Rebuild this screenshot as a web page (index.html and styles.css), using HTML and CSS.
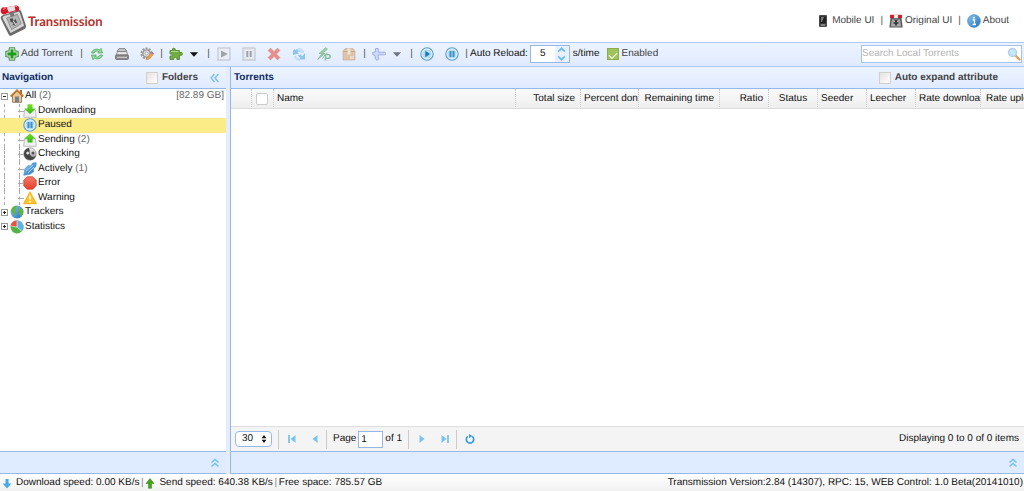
FILE: index.html
```html
<!DOCTYPE html>
<html lang="en">
<head>
<meta charset="utf-8">
<title>Transmission</title>
<link rel="stylesheet" href="styles.css">
</head>
<body>
<svg class="defs" width="0" height="0" aria-hidden="true">
  <defs>
    <linearGradient id="g-blue" x1="0" y1="0" x2="1" y2="1"><stop offset="0" stop-color="#8cc8f4"/><stop offset="1" stop-color="#1f6fbd"/></linearGradient>
    <linearGradient id="g-green" x1="0" y1="0" x2="0" y2="1"><stop offset="0" stop-color="#7be02a"/><stop offset="1" stop-color="#2fb512"/></linearGradient>
    <linearGradient id="g-grey" x1="0" y1="0" x2="0" y2="1"><stop offset="0" stop-color="#f4f4f4"/><stop offset="1" stop-color="#8a8a8a"/></linearGradient>
    <linearGradient id="g-red" x1="0" y1="0" x2="0" y2="1"><stop offset="0" stop-color="#f87a64"/><stop offset="1" stop-color="#e2412e"/></linearGradient>
  </defs>
  <symbol id="logo" viewBox="0 0 28 36">
    <path d="M3 14 19 9q2-1 3 1l5 15q0 2-1 3L12 35q-2 1-3-1L1 18q-1-3 2-4z" fill="#6b6b6b"/>
    <path d="M4 15 19 10.500q1-.4 1.500 1L25 25 11 32.500 3 18q-1-2 1-3z" fill="#d5d5d5"/>
    <path d="M7 17 18 13l4 10-10 6z" fill="#b4b4b4" stroke="#777" stroke-width=".7"/>
    <path d="m10 18 3-1 1 3 2-2 2 4-2 3-3-1 1-2-3-1z" fill="#505050"/>
    <path d="m14 20 2 4 1-2" fill="none" stroke="#eee" stroke-width="1"/>
    <path d="m9 8 4-1 2 8-4 1z" fill="#777"/>
    <path d="M1 8q-1 4 2 5 2 1 4-1l9-2q3 1 4-2 0-4-3-4L5 6Q2 5 1 8z" fill="#d8182a"/>
    <path d="m7 6 8-2 1 5-7 2z" fill="#e9e4e4"/><path d="m3 8 3-1M16 5l2 0" stroke="#ff8790" stroke-width="1"/>
  </symbol>
  <symbol id="phone" viewBox="0 0 14 14"><rect x="3" y="1" width="8" height="12" rx="1" fill="#4b4b4b"/><rect x="4" y="2.500" width="6" height="7" fill="#222"/><path d="M5 3h3L6 8H5z" fill="#777"/><path d="M5 11h4" stroke="#bbb"/></symbol>
  <symbol id="original" viewBox="0 0 14 14"><path d="M1.500 4h11L13.700 13.500H.3z" fill="#5d5d5d"/><path d="M3 5.500h8l1 7H2z" fill="#a9a9a9"/><path d="M5 4h4v3H5z" fill="#777"/><path d="M1 .8h12V4H1z" fill="#d51d23"/><path d="M5 .8h4V4H5z" fill="#eee"/><path d="M7 6v5.500M4.500 9h5" stroke="#333" stroke-width="1.700"/></symbol>
  <symbol id="info" viewBox="0 0 14 14"><circle cx="7" cy="7" r="6.300" fill="url(#g-blue)" stroke="#3c86c8" stroke-width=".8"/><circle cx="7" cy="3.800" r="1" fill="#fff"/><path d="M5.700 6h1.800v4M5.500 10.500h3.500" stroke="#fff" stroke-width="1.300" fill="none"/></symbol>
  <symbol id="add" viewBox="0 0 14 14"><path d="M4.500.8h5l.6 3.100 3.100.6v5l-3.100.6-.6 3.100h-5l-.6-3.100-3.100-.6v-5l3.100-.6z" fill="#c4e8c0" stroke="#5b8f58" stroke-width="1.100"/><path d="M7 2.500v9M2.500 7h9" stroke="#1e9a1e" stroke-width="2.800"/></symbol>
  <symbol id="reload" viewBox="0 0 14 14"><path d="M1.500 6C2 2.500 7 1 9.500 3L11 1.300 12.500 6H7.700L9 4.700C7 3.300 4.500 4 4 6z" fill="#8fdc94" stroke="#4aa45a" stroke-width=".7"/><path d="M12.500 8c-.5 3.500-5.500 5-8 3L3 12.700 1.500 8h4.800L5 9.300C7 10.700 9.500 10 10 8z" fill="#8fdc94" stroke="#4aa45a" stroke-width=".7"/></symbol>
  <symbol id="drive" viewBox="0 0 14 14"><path d="M4 1.500h6l2 3H2z" fill="#aaa" stroke="#777" stroke-width=".7"/><path d="M2.500 4.500h9L13 8H1z" fill="#ddd" stroke="#777" stroke-width=".7"/><rect x=".5" y="8" width="13" height="4.500" rx="1" fill="#888" stroke="#666" stroke-width=".7"/><path d="M2 10.300h10M4 3h6M3 6.300h8" stroke="#eee" stroke-width=".8"/></symbol>
  <symbol id="gear" viewBox="0 0 14 14"><circle cx="6.500" cy="6.500" r="5" fill="none" stroke="#999" stroke-width="2.200" stroke-dasharray="2 1.140"/><circle cx="6.500" cy="6.500" r="3.600" fill="#ddd" stroke="#999" stroke-width="1.400"/><circle cx="6.500" cy="6.500" r="1.500" fill="#f8f8ff" stroke="#888" stroke-width=".6"/><path d="m6.500 13 1-3 3.700-4.200 2 1.800L9.300 12z" fill="#f3a13b" stroke="#c27836" stroke-width=".4"/><path d="m11 6 1-1.200 2 1.700-1 1.200z" fill="#c95fc0"/></symbol>
  <symbol id="puzzle" viewBox="0 0 14 14"><path d="M1 3.500h2.700Q2.700 1.200 4.800 1.200T6 3.500h4.500v2.300q2.800-1.500 3 .9t-3 1.500v4.300H7.800q.8-2.200-1.500-2.200t-1.500 2.200H1V9q2.300.6 2.300-1T1 7z" fill="#73ac40" stroke="#4b8424" stroke-width=".8"/><path d="M2 4.500h7.500" stroke="#b2d98a"/></symbol>
  <symbol id="caret" viewBox="0 0 8 6"><path d="M.5 1h7L4 5z"/></symbol>
  <symbol id="start" viewBox="0 0 14 14"><rect x="1" y="1" width="12" height="12" fill="#eee" stroke="#999"/><path d="M4 3.500 11 7l-7 3.500z" fill="#666"/></symbol>
  <symbol id="pause" viewBox="0 0 14 14"><rect x="1" y="1" width="12" height="12" fill="#e5e5e5" stroke="#999"/><path d="M5.300 4v6M8.700 4v6" stroke="#666" stroke-width="2"/></symbol>
  <symbol id="remove" viewBox="0 0 14 14"><path d="m3.500 1 3.500 3.500L10.500 1 13 3.500 9.500 7l3.500 3.500-2.500 2.500L7 9.500 3.500 13 1 10.500 4.500 7 1 3.500z" fill="#e2452f" stroke="#d0402e" stroke-width=".5"/></symbol>
  <symbol id="recheck" viewBox="0 0 14 14"><path d="M1 8V3.500L2.500 2l1 1Q6 .5 9 2L7.500 4.500 5.500 5 7 6.500z" fill="#4aa3dc"/><path d="M5 2.500 8.500 6H12V4L9 1z" fill="#a5d5f0"/><path d="M13 6v6.500H7l1.500-1.700Q6.500 10 6 8l3-.5q0 1.500 1.200 1.800z" fill="#4aa3dc"/><path d="M3 9q1 4 5 4" fill="none" stroke="#a0d2ee" stroke-width="2"/></symbol>
  <symbol id="announce" viewBox="0 0 14 14"><path d="M8.500.7 2 6.500h3L.7 12.500 8 6.500H5.800L10.500 2z" fill="#53c04b" stroke="#2f8b38" stroke-width=".7"/><path d="M8.500 13.500V7.500h2q2.700 0 2.700 1.900t-2.700 1.900h-2" fill="none" stroke="#3d9a4c" stroke-width="1.500"/><path d="M5.500 11.500q2-4 5-5.500" fill="none" stroke="#777"/></symbol>
  <symbol id="box" viewBox="0 0 14 14"><path d="M1 4 3 1.500h8L13 4v9H1z" fill="#d8a165" stroke="#b57e45" stroke-width=".7"/><path d="M1.500 4.500h11" stroke="#a86f35"/><path d="M5.500 1.500h3V8L7 7 5.500 8z" fill="#f4dfb2"/><path d="M8 9h4v3H8z" fill="#efcaa0"/></symbol>
  <symbol id="speed" viewBox="0 0 14 14"><path d="M3.500 1.500h2.700v3.700h6.300q1 0 1 1.300t-1 1.300H6.200v2.400l.8 1.600-2 1.500-1.800-1.500V8.800L.7 7.500v-2l2.800-.8z" fill="#bcc8f5" stroke="#6477e0" stroke-width="1"/></symbol>
  <symbol id="play-c" viewBox="0 0 14 14"><circle cx="7" cy="7" r="6.200" fill="#e3f3fc" stroke="#5a9dca" stroke-width="1.100"/><circle cx="7" cy="7" r="4.600" fill="#b4dcf5"/><path d="M5.300 3.700 10 7l-4.700 3.300z" fill="#1778ba"/></symbol>
  <symbol id="pause-c" viewBox="0 0 14 14"><circle cx="7" cy="7" r="6.200" fill="#e3f3fc" stroke="#5a9dca" stroke-width="1.100"/><circle cx="7" cy="7" r="4.600" fill="#b4dcf5"/><path d="M5.500 4v6M8.500 4v6" stroke="#3f8ec6" stroke-width="2"/></symbol>
  <symbol id="search" viewBox="0 0 14 14"><path d="m8.500 8.500 4 4" stroke="#e2a355" stroke-width="2.400" stroke-linecap="round"/><circle cx="5.500" cy="5.500" r="4" fill="#c6e6fa" stroke="#b3cfe6" stroke-width="1.400"/></symbol>
  <symbol id="up" viewBox="0 0 8 5"><path d="M1 4 4 1l3 3" fill="none" stroke="#6fbdf0" stroke-width="1.600"/></symbol>
  <symbol id="down" viewBox="0 0 8 5"><path d="m1 1 3 3 3-3" fill="none" stroke="#6fbdf0" stroke-width="1.600"/></symbol>
  <symbol id="dbl-left" viewBox="0 0 10 10"><path d="M4.500 1 1 5l3.500 4M8.500 1 5 5l3.500 4" fill="none" stroke="#71bff2" stroke-width="1.300"/></symbol>
  <symbol id="dbl-up" viewBox="0 0 10 10"><path d="M1.500 4.500 5 1.500l3.500 3M1.500 8.500l3.500-3 3.500 3" fill="none" stroke="#71bff2" stroke-width="1.400"/></symbol>
  <symbol id="home" viewBox="0 0 14 14"><path d="M2.500 6 7 2l4.500 4v7.300h-9z" fill="#e8c897" stroke="#8d6b42" stroke-width=".8"/><path d="M10 1h2v4h-2z" fill="#a7693c"/><path d="M.7 7.500 7 1.300l6.300 6.200" fill="none" stroke="#c0792f" stroke-width="1.800"/><path d="M5 7.500h4v6H5z" fill="#77818c"/></symbol>
  <symbol id="t-down" viewBox="0 0 14 14"><path d="M1.500 6h11l.8 7.300H.7z" fill="#efefef" stroke="#b0b0b0" stroke-width=".8"/><path d="M4.500.3h5v4.200h3.300L7 10 1.200 4.500h3.300z" fill="url(#g-green)"/></symbol>
  <symbol id="t-up" viewBox="0 0 14 14"><path d="M1.500 6h11l.8 7.300H.7z" fill="#efefef" stroke="#b0b0b0" stroke-width=".8"/><path d="M7 .2 12.800 5.700H9.500V9.500h-5V5.700H1.200z" fill="url(#g-green)"/></symbol>
  <symbol id="check" viewBox="0 0 14 14"><circle cx="7" cy="7" r="6.200" fill="url(#g-grey)" stroke="#777" stroke-width=".6"/><path d="M6 1a6 6 0 1 0 6.800 7.500Q10 11 8 9T6.500 5 6 1z" fill="#444"/><circle cx="4.700" cy="6" r="1.500" fill="#ddd"/><circle cx="10" cy="6" r="1.500" fill="#555"/></symbol>
  <symbol id="active" viewBox="0 0 14 14"><path d="M.7 13.300 1.800 7 5 3.500l3 .3L9.500 1l3.800-.3-.5 4-2.300 2 .2 3L7 12.300z" fill="url(#g-blue)" stroke="#4a90cc" stroke-width=".6"/><path d="m3 9 7-6M5 11l6-6" stroke="#a9d6f6" stroke-width="1"/></symbol>
  <symbol id="error" viewBox="0 0 14 14"><path d="M4.300.8h5.400l3.500 3.500v5.400l-3.500 3.500H4.300L.8 9.700V4.300z" fill="url(#g-red)" stroke="#d3402f" stroke-width=".8" stroke-linejoin="round"/></symbol>
  <symbol id="warn" viewBox="0 0 14 14"><path d="M7 1 13.300 12.700H.7z" fill="#fcc52f" stroke="#f7b71f" stroke-width="1.200" stroke-linejoin="round"/><path d="M7 4.500v4M7 10v1.500" stroke="#fff" stroke-width="1.500"/></symbol>
  <symbol id="globe" viewBox="0 0 14 14"><circle cx="7" cy="7" r="6.500" fill="url(#g-blue)"/><path d="M2 3Q5 0 7 1L6 4 4.500 5 6 7l-1 4-2-3-2-2zM9 4l3-1q1.800 3 1 6l-2.500 3-1-4L8 6z" fill="#62b53a"/></symbol>
  <symbol id="pie" viewBox="0 0 14 14"><circle cx="7" cy="7" r="6.500" fill="#53b344"/><path d="M7 7V.5A6.500 6.500 0 0 0 .6 6z" fill="#e85242"/><path d="M7 7V.5a6.500 6.500 0 0 1 4.700 11z" fill="#5eb3e7"/><path d="M7 1v6l4.500 4M7 7 1 6" fill="none" stroke="#fff" stroke-width=".6"/></symbol>
  <symbol id="first" viewBox="0 0 10 10"><path d="M2 1v8" stroke="#7cc3f1" stroke-width="1.800"/><path d="M8.500 1v8L3.500 5z" fill="#7cc3f1"/></symbol>
  <symbol id="prev" viewBox="0 0 10 10"><path d="M7.500 1v8l-5-4z" fill="#7cc3f1"/></symbol>
  <symbol id="next" viewBox="0 0 10 10"><path d="M2.500 1v8l5-4z" fill="#7cc3f1"/></symbol>
  <symbol id="last" viewBox="0 0 10 10"><path d="M8 1v8" stroke="#7cc3f1" stroke-width="1.800"/><path d="M1.500 1v8l5-4z" fill="#7cc3f1"/></symbol>
  <symbol id="refresh" viewBox="0 0 10 10"><path d="M2.800 2.400a3.700 3.700 0 1 0 4.400 0" fill="none" stroke="#359ee0" stroke-width="1.700"/><path d="M4 0 7.500 2 4 4.300z" fill="#359ee0"/></symbol>
  <symbol id="sort" viewBox="0 0 6 10"><path d="M0 4h6L3 0zM0 6h6L3 10z" fill="#111"/></symbol>
  <symbol id="arr-down" viewBox="0 0 10 12"><path d="M3.500 2h3v4.500h2.800L5 11.500.7 6.500h2.800z" fill="#45a9ea"/></symbol>
  <symbol id="arr-up" viewBox="0 0 10 12"><path d="M5 1.500 9 6.500H6.500v4.800h-3V6.500H1z" fill="#46a31d" stroke="#2d7d10" stroke-width=".5"/></symbol>
</svg>

<div class="app">
  <header class="top">
    <div class="brand"><svg class="logo"><use href="#logo"/></svg><span class="brand-name">Transmission</span></div>
    <nav class="links">
      <a href="#mobile"><svg class="icon"><use href="#phone"/></svg>Mobile UI</a><span class="bar">|</span>
      <a href="#original"><svg class="icon"><use href="#original"/></svg>Original UI</a><span class="bar">|</span>
      <a href="#about"><svg class="icon"><use href="#info"/></svg>About</a>
    </nav>
  </header>

  <div class="toolbar">
    <button class="tool-text"><svg class="icon"><use href="#add"/></svg>Add Torrent</button>
    <span class="sep">|</span>
    <button class="tool" aria-label="Start queue"><svg class="icon"><use href="#reload"/></svg></button>
    <button class="tool" aria-label="Alternative speed"><svg class="icon"><use href="#drive"/></svg></button>
    <button class="tool" aria-label="Settings"><svg class="icon"><use href="#gear"/></svg></button>
    <span class="sep">|</span>
    <button class="tool-menu" aria-label="Plugins"><svg class="icon"><use href="#puzzle"/></svg><svg class="caret"><use href="#caret"/></svg></button>
    <span class="sep">|</span>
    <span class="torrent-tools">
      <button class="tool" disabled aria-label="Start"><svg class="icon"><use href="#start"/></svg></button>
      <button class="tool" disabled aria-label="Pause"><svg class="icon"><use href="#pause"/></svg></button>
      <button class="tool" disabled aria-label="Remove"><svg class="icon"><use href="#remove"/></svg></button>
      <button class="tool" disabled aria-label="Recheck"><svg class="icon"><use href="#recheck"/></svg></button>
      <button class="tool" disabled aria-label="Reannounce"><svg class="icon"><use href="#announce"/></svg></button>
      <button class="tool" disabled aria-label="Change folder"><svg class="icon"><use href="#box"/></svg></button>
    </span>
    <span class="sep">|</span>
    <button class="tool-menu" disabled aria-label="Queue"><svg class="icon"><use href="#speed"/></svg><svg class="caret"><use href="#caret"/></svg></button>
    <span class="sep">|</span>
    <button class="tool" aria-label="Start all"><svg class="icon"><use href="#play-c"/></svg></button>
    <button class="tool" aria-label="Pause all"><svg class="icon"><use href="#pause-c"/></svg></button>
    <span class="sep">|</span>
    <label class="reload-label" for="interval">Auto Reload:</label>
    <span class="spinner">
      <input id="interval" type="text" value="5">
      <span class="spin-buttons">
        <button aria-label="Increase"><svg><use href="#up"/></svg></button>
        <button aria-label="Decrease"><svg><use href="#down"/></svg></button>
      </span>
    </span>
    <span class="unit">s/time</span>
    <label class="enabled"><input type="checkbox" class="tick" checked>Enabled</label>
    <span class="search"><input type="text" placeholder="Search Local Torrents" aria-label="Search Local Torrents"><button aria-label="Search"><svg class="icon"><use href="#search"/></svg></button></span>
  </div>

  <div class="main">
    <aside class="side">
      <div class="panel-head">
        <h2>Navigation</h2>
        <label class="head-check folders"><input type="checkbox" class="box">Folders</label>
        <button class="mini" aria-label="Collapse navigation"><svg><use href="#dbl-left"/></svg></button>
      </div>
      <div class="side-body">
        <ul class="tree">
          <li class="root open"><button class="twist minus" aria-label="Collapse"></button><svg class="icon"><use href="#home"/></svg><span>All <i>(2)</i></span><span class="size">[82.89 GB]</span></li>
          <li class="leaf"><svg class="icon"><use href="#t-down"/></svg><span>Downloading</span></li>
          <li class="leaf selected"><svg class="icon"><use href="#pause-c"/></svg><span>Paused</span></li>
          <li class="leaf"><svg class="icon"><use href="#t-up"/></svg><span>Sending <i>(2)</i></span></li>
          <li class="leaf"><svg class="icon"><use href="#check"/></svg><span>Checking</span></li>
          <li class="leaf"><svg class="icon"><use href="#active"/></svg><span>Actively <i>(1)</i></span></li>
          <li class="leaf"><svg class="icon"><use href="#error"/></svg><span>Error</span></li>
          <li class="leaf"><svg class="icon"><use href="#warn"/></svg><span>Warning</span></li>
          <li class="root"><button class="twist plus" aria-label="Expand"></button><svg class="icon"><use href="#globe"/></svg><span>Trackers</span></li>
          <li class="root"><button class="twist plus" aria-label="Expand"></button><svg class="icon"><use href="#pie"/></svg><span>Statistics</span></li>
        </ul>
      </div>
      <div class="folded"><button class="mini" aria-label="Expand panel"><svg><use href="#dbl-up"/></svg></button></div>
    </aside>

    <section class="content">
      <div class="panel-head">
        <h2>Torrents</h2>
        <label class="head-check expand"><input type="checkbox" class="box">Auto expand attribute</label>
      </div>
      <div class="grid">
        <table>
          <colgroup><col class="w-num"><col class="w-chk"><col><col class="w-65"><col class="w-58"><col class="w-81"><col class="w-49"><col class="w-49"><col class="w-49"><col class="w-49"><col class="w-65"><col class="w-65"></colgroup>
          <thead><tr>
            <th></th><th class="chk"><input type="checkbox" class="plain" aria-label="Select all"></th><th>Name</th>
            <th class="num">Total size</th><th>Percent done</th><th class="num">Remaining time</th><th class="num">Ratio</th><th class="mid">Status</th><th>Seeder</th><th>Leecher</th><th>Rate download</th><th class="num">Rate upload</th>
          </tr></thead>
        </table>
      </div>
      <div class="pager">
        <span class="page-size"><select aria-label="Page size"><option>30</option></select><svg><use href="#sort"/></svg></span>
        <span class="rule"></span>
        <button class="page-btn" aria-label="First page"><svg><use href="#first"/></svg></button>
        <button class="page-btn" aria-label="Previous page"><svg><use href="#prev"/></svg></button>
        <span class="rule"></span>
        <label class="page-no">Page <input type="text" value="1"> of 1</label>
        <span class="rule"></span>
        <button class="page-btn" aria-label="Next page"><svg><use href="#next"/></svg></button>
        <button class="page-btn" aria-label="Last page"><svg><use href="#last"/></svg></button>
        <span class="rule"></span>
        <button class="page-btn" aria-label="Refresh"><svg><use href="#refresh"/></svg></button>
        <span class="count">Displaying 0 to 0 of 0 items</span>
      </div>
      <div class="folded"><button class="mini" aria-label="Expand attributes"><svg><use href="#dbl-up"/></svg></button></div>
    </section>
  </div>

  <footer class="status">
    <svg class="arrow"><use href="#arr-down"/></svg><span>Download speed: 0.00 KB/s</span><span class="bar">|</span>
    <svg class="arrow"><use href="#arr-up"/></svg><span>Send speed: 640.38 KB/s</span><span class="bar">|</span><span>Free space: 785.57 GB</span>
    <span class="version">Transmission Version:2.84 (14307), RPC: 15, WEB Control: 1.0 Beta(20141010)</span>
  </footer>
</div>
</body>
</html>
```
FILE: styles.css
```css
* { box-sizing: border-box; }

body {
  margin: 0;
  font: 10px/14px "Liberation Sans", Arial, sans-serif;
  text-rendering: geometricPrecision;
  color: #111;
  background: #fff;
}

.defs { position: absolute; }
svg { display: block; flex: none; }
i { font-style: normal; color: #666; }
h2 { margin: 0; font-size: 10px; color: #0e2d5f; }

button {
  display: flex;
  align-items: center;
  margin: 0;
  padding: 0;
  border: 0;
  background: none;
  font: inherit;
  text-rendering: inherit;
  white-space: nowrap;
  color: #444;
}

input, select {
  margin: 0;
  padding: 0;
  border: 1px solid #95b8e7;
  border-radius: 0;
  background: #fff;
  font: inherit;
  text-rendering: inherit;
  color: #111;
}

.icon { width: 14px; height: 14px; }

.app {
  display: flex;
  flex-direction: column;
  height: 100vh;
  overflow: hidden;
}

/* Header */
.top {
  display: flex;
  flex: none;
  justify-content: space-between;
  height: 42px;
}
.brand { display: flex; align-items: flex-start; }
.logo { width: 27px; height: 38px; }
.brand-name {
  padding: 11px 0 0 1px;
  font: 700 13px/20px Lato, sans-serif;
  color: #b5302a;
}
.links {
  display: flex;
  align-items: center;
  gap: 6px;
  padding-right: 15px;
  color: #555;
}
.links a {
  display: flex;
  align-items: center;
  gap: 2px;
  color: #444;
  text-decoration: none;
}

/* Toolbar */
.toolbar {
  display: flex;
  flex: none;
  align-items: center;
  height: 25px;
  padding: 0 2px 1px 5px;
  border-top: 1px solid #a9c8f5;
  border-bottom: 1px solid #a9c8f5;
  background: linear-gradient(#ecf3ff, #e0ebff);
  white-space: nowrap;
}
.sep { width: 5px; text-align: center; color: #555; }
.tool { justify-content: center; width: 25px; height: 20px; }
.tool-text { gap: 2px; width: 74px; }
.tool-menu { gap: 6px; width: 42px; padding-left: 5px; }
.torrent-tools { display: flex; padding-right: 1px; }
.caret { width: 10px; height: 7px; fill: #111; }
button:disabled { opacity: .55; }
.reload-label { padding-left: 1px; }

.spinner {
  display: flex;
  width: 40px;
  height: 18px;
  margin: 0 3px 0 2px;
  border: 1px solid #95b8e7;
  background: #e8f1ff;
}
.spinner input { width: 24px; border: 0; text-align: center; }
.spin-buttons { display: flex; flex: 1; flex-direction: column; justify-content: space-around; }
.spin-buttons button { justify-content: center; }
.spin-buttons svg { width: 9px; height: 6px; }

.enabled { display: flex; align-items: center; gap: 3px; margin-left: 7px; color: #444; }
.tick {
  display: grid;
  place-items: center;
  appearance: none;
  width: 12px;
  height: 12px;
  border-color: #8bae48;
  background: #a0c35c;
}
.tick::before {
  content: "";
  width: 7px;
  height: 4px;
  border: solid #fff;
  border-width: 0 0 1px 1px;
  transform: rotate(-45deg);
}

.search {
  display: flex;
  align-items: center;
  width: 161px;
  height: 18px;
  margin-left: auto;
  border: 1px solid #a4c3ee;
  background: #fff;
}
.search input { flex: 1; min-width: 0; border: 0; }
.search input::placeholder { color: #b4b4b4; opacity: 1; }

/* Panels */
.main {
  display: grid;
  flex: 1;
  grid-template-columns: 226px 1fr;
  gap: 4px;
  min-height: 0;
  background: #e3edfb;
}
.side, .content { display: flex; flex-direction: column; min-width: 0; min-height: 0; }
.content { border-left: 1px solid #95b8e7; }

.panel-head {
  display: flex;
  flex: none;
  align-items: center;
  height: 22px;
  padding: 0 6px 0 2px;
  border-bottom: 1px solid #95b8e7;
  background: linear-gradient(#edf4ff, #e0ebff);
}
.content .panel-head { padding-left: 3px; }
.head-check { display: flex; align-items: center; gap: 4px; margin-left: auto; font-weight: bold; color: #444; }
.folders { margin-right: 12px; }
.expand { margin-right: 20px; }
.box {
  appearance: none;
  width: 12px;
  height: 12px;
  border-color: #d2d0cc;
  background: linear-gradient(135deg, #e4e2dc, #fff);
}
.mini svg { width: 10px; height: 10px; }
.folded {
  display: flex;
  flex: none;
  align-items: center;
  justify-content: flex-end;
  height: 23px;
  padding-right: 6px;
  border-top: 1px solid #95b8e7;
  border-bottom: 1px solid #95b8e7;
  background: #dfebff;
}

/* Navigation tree */
.side-body { flex: 1; min-height: 0; background: #fff; }
.tree {
  display: grid;
  grid-auto-rows: 1fr;
  height: 145px;
  margin: 0;
  padding: 0;
  list-style: none;
}
.tree li {
  position: relative;
  display: flex;
  align-items: center;
  padding-right: 2px;
  white-space: nowrap;
}
.root { gap: 1px; padding-left: 1px; }
.root .icon { margin-left: 1px; }
.leaf { gap: 1px; padding-left: 23px; }
.size { margin-left: auto; color: #666; }
.selected { background: #fbec88; }
.leaf::before {
  content: "";
  position: absolute;
  inset: 0 auto 0 4px;
  width: 14px;
  border: dashed #aaa;
  border-width: 0 1px;
}
.leaf::after {
  content: "";
  position: absolute;
  top: 50%;
  left: 18px;
  width: 6px;
  border-top: 1px dashed #aaa;
}
.leaf.selected::before, .leaf.selected::after { display: none; }
.twist {
  flex: none;
  justify-content: center;
  width: 7px;
  height: 7px;
  border: 1px solid #999;
  background: #fff;
}
.twist::before { content: ""; width: 3px; height: 1px; background: #222; }
.plus { display: grid; place-items: center; }
.plus::before, .plus::after { grid-area: 1 / 1; }
.plus::after { content: ""; width: 1px; height: 3px; background: #222; }

/* Torrent list */
.grid { flex: 1; min-height: 0; overflow: hidden; background: #fff; }
.grid table {
  width: calc(100% + 22px);
  table-layout: fixed;
  border-collapse: separate;
  border-spacing: 0;
}
.grid th {
  height: 20px;
  padding: 0 0 0 3px;
  overflow: hidden;
  border-right: 1px dotted #ccc;
  border-bottom: 1px solid #ddd;
  background: linear-gradient(#fafafa, #eee);
  font-weight: normal;
  text-align: left;
  white-space: nowrap;
}
.grid .num { padding: 0 5px; text-align: right; }
.grid .mid { padding: 0; text-align: center; }
.grid .chk { padding: 0 4px; }
.plain {
  display: block;
  appearance: none;
  width: 12px;
  height: 12px;
  border-color: #ccc;
  border-radius: 2px;
}
.w-num { width: 21px; }
.w-chk { width: 22px; }
.w-49 { width: 49px; }
.w-58 { width: 58px; }
.w-65 { width: 65px; }
.w-81 { width: 81px; }

.pager {
  display: flex;
  flex: none;
  align-items: center;
  height: 25px;
  padding: 0 5px 0 4px;
  border-top: 1px solid #ddd;
  background: #f4f4f4;
}
.page-size { display: grid; align-items: center; margin-right: 6px; }
.page-size select {
  grid-area: 1 / 1;
  appearance: none;
  width: 37px;
  height: 16px;
  padding-left: 6px;
  border-radius: 4px;
}
.page-size svg {
  grid-area: 1 / 1;
  justify-self: end;
  width: 6px;
  height: 8px;
  margin-right: 5px;
  pointer-events: none;
}
.rule { width: 1px; height: 19px; background: #ccc; }
.page-btn { justify-content: center; width: 22px; height: 20px; }
.page-btn svg { width: 10px; height: 10px; }
.rule + .page-btn { width: 25px; }
.page-no { display: flex; align-items: center; gap: 2px; padding: 0 6px; }
.page-no input { width: 25px; height: 17px; padding-left: 2px; }
.count { margin-left: auto; }

/* Status bar */
.status {
  display: flex;
  flex: none;
  align-items: center;
  height: 17px;
  padding: 0 1px 0 2px;
  background: linear-gradient(#fff, #f1f1f1);
  white-space: nowrap;
}
.arrow { width: 10px; height: 12px; margin-right: 4px; }
.status .bar { width: 6px; text-align: center; color: #888; }
.version { margin-left: auto; }
```
